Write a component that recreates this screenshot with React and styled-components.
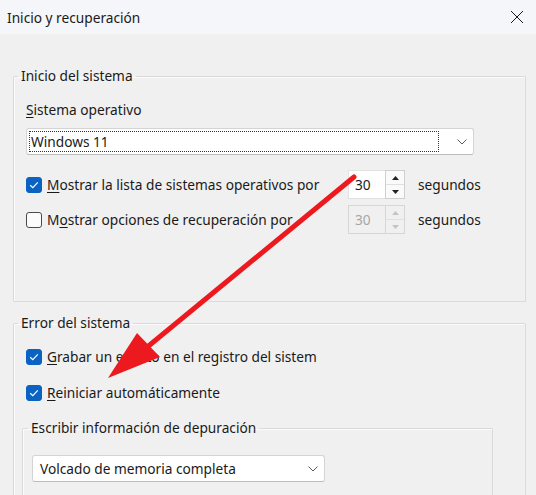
import React from 'react';
import styled, { createGlobalStyle } from 'styled-components';

const GlobalStyle = createGlobalStyle`
  html, body {
    margin: 0;
    padding: 0;
    background: #f0f0f0;
  }
  * {
    box-sizing: border-box;
  }
`;

const Dialog = styled.div`
  position: relative;
  width: 536px;
  height: 495px;
  overflow: hidden;
  background: #f0f0f0;
  font-family: 'Noto Sans', 'Open Sans', sans-serif;
  font-size: 13.7px;
  color: #1a1a1a;
`;

const TitleBar = styled.div`
  height: 34px;
  display: flex;
  align-items: center;
  justify-content: space-between;
  padding: 0 12px 0 7px;
  background: #f5f6fa;
`;

const CloseButton = styled.div`
  width: 14px;
  height: 14px;
  display: flex;
  align-items: center;
  justify-content: center;
`;

const Body = styled.div`
  padding: 32px 10px 0 13px;
`;

const Group = styled.fieldset`
  margin: ${p => p.$margin || '0'};
  padding: ${p => p.$padding || '0 12px'};
  border: 1px solid #dadada;
  border-radius: 1px;
  box-shadow: inset 1px 1px 0 #fbfbfb;
  min-width: 0;
`;

const Legend = styled.legend`
  padding: 0 3px;
  margin-left: ${p => p.$shift || 0}px;
  height: 20px;
  line-height: 20px;
  color: #1a1a1a;
`;

const Label = styled.div`
  line-height: 20px;
  margin-top: 14px;
`;

const AccessKey = styled.span`
  text-decoration: underline;
  text-underline-offset: 2px;
  text-decoration-thickness: 1px;
`;

const Select = styled.div`
  width: ${p => p.$width}px;
  height: 27px;
  margin-top: ${p => p.$top || 0}px;
  display: flex;
  align-items: center;
  background: #fff;
  border: 1px solid #d4d4d4;
  border-bottom-color: #bcbcbc;
  border-radius: 3px;
  padding: 2px 6px 2px 2px;
`;

const SelectValue = styled.div`
  flex: 1;
  height: 100%;
  display: flex;
  align-items: center;
  padding-left: ${p => (p.$focused ? 1 : 4)}px;
  border: 1px dotted ${p => (p.$focused ? '#333' : 'transparent')};
  margin-right: ${p => p.$gap}px;
  white-space: nowrap;
`;

const OptionRow = styled.div`
  display: grid;
  grid-template-columns: 309px 57px auto;
  column-gap: 13px;
  align-items: center;
  margin-top: ${p => p.$top}px;
`;

const CheckLine = styled.label`
  display: flex;
  align-items: center;
  gap: 5px;
  line-height: 20px;
  white-space: nowrap;
  margin-top: ${p => p.$top || 0}px;
`;

const Box = styled.span`
  width: 16px;
  height: 16px;
  flex: none;
  border-radius: 3px;
  display: flex;
  align-items: center;
  justify-content: center;
  background: ${p => (p.$checked ? '#0a63c3' : '#fbfbfb')};
  border: 1px solid ${p => (p.$checked ? '#0a63c3' : '#4a4a4a')};
`;

const Spinner = styled.div`
  height: 29px;
  display: flex;
  background: ${p => (p.$disabled ? '#f0f0f0' : '#fff')};
  border: 1px solid ${p => (p.$disabled ? '#d6d6d6' : '#e2e2e2')};
  border-right: none;
  color: ${p => (p.$disabled ? '#a6a6a6' : '#1a1a1a')};
`;

const SpinValue = styled.div`
  flex: 1;
  display: flex;
  align-items: center;
  padding-left: 6px;
`;

const SpinButtons = styled.div`
  width: 20px;
  display: flex;
  flex-direction: column;
  border: 1px solid ${p => (p.$disabled ? '#d6d6d6' : '#cfcfcf')};
  margin: -1px 0;
  background: ${p => (p.$disabled ? '#f0f0f0' : '#fafafa')};
`;

const SpinButton = styled.div`
  flex: 1;
  display: flex;
  align-items: center;
  justify-content: center;
  & + & {
    border-top: 1px solid ${p => (p.$disabled ? '#e0e0e0' : '#d8d8d8')};
  }
`;

const Arrow = styled.svg`
  position: absolute;
  left: 0;
  top: 0;
  pointer-events: none;
`;

const Check = () => (
  <svg width="10" height="8" viewBox="0 0 10 8">
    <path d="M1.2 4.2 L3.8 6.6 L8.8 1.4" fill="none" stroke="#fff" strokeWidth="1.2" />
  </svg>
);

const Chevron = () => (
  <svg width="10" height="6" viewBox="0 0 10 6">
    <path d="M0.5 0.5 L5 5 L9.5 0.5" fill="none" stroke="#5a5a5a" strokeWidth="1" />
  </svg>
);

const Tri = ({ up, color }) => (
  <svg width="7" height="4" viewBox="0 0 7 4">
    <path d={up ? 'M0 4 L3.5 0 L7 4 Z' : 'M0 0 L3.5 4 L7 0 Z'} fill={color} />
  </svg>
);

const Checkbox = ({ checked, children, top }) => (
  <CheckLine $top={top}>
    <Box $checked={checked}>{checked && <Check />}</Box>
    <span>{children}</span>
  </CheckLine>
);

const NumberField = ({ value, disabled }) => {
  const c = disabled ? '#c4c4c4' : '#222';
  return (
    <Spinner $disabled={disabled}>
      <SpinValue>{value}</SpinValue>
      <SpinButtons $disabled={disabled}>
        <SpinButton $disabled={disabled}>
          <Tri up color={c} />
        </SpinButton>
        <SpinButton $disabled={disabled}>
          <Tri color={c} />
        </SpinButton>
      </SpinButtons>
    </Spinner>
  );
};

export default function App() {
  return (
    <Dialog>
      <GlobalStyle />
      <TitleBar>
        <span>Inicio y recuperación</span>
        <CloseButton>
          <svg width="14" height="14" viewBox="0 0 14 14">
            <path d="M1 1 L13 13 M13 1 L1 13" stroke="#1a1a1a" strokeWidth="1" />
          </svg>
        </CloseButton>
      </TitleBar>

      <Body>
        <Group $padding="0 12px 67px">
          <Legend $shift={-8}>Inicio del sistema</Legend>
          <Label>
            <AccessKey>S</AccessKey>istema operativo
          </Label>
          <Select $width={448} $top={8}>
            <SelectValue $focused $gap={18}>Windows 11</SelectValue>
            <Chevron />
          </Select>
          <OptionRow $top={15}>
            <Checkbox checked>
              <AccessKey>M</AccessKey>ostrar la lista de sistemas operativos por
            </Checkbox>
            <NumberField value="30" />
            <span>segundos</span>
          </OptionRow>
          <OptionRow $top={6}>
            <Checkbox>
              M<AccessKey>o</AccessKey>strar opciones de recuperación por
            </Checkbox>
            <NumberField value="30" disabled />
            <span>segundos</span>
          </OptionRow>
        </Group>

        <Group $margin="11px 0 0" $padding="0 12px 40px">
          <Legend $shift={-8}>Error del sistema</Legend>
          <Checkbox checked top={14}>
            <AccessKey>G</AccessKey>rabar un evento en el registro del sistem
          </Checkbox>
          <Checkbox checked top={16}>
            <AccessKey>R</AccessKey>einiciar automáticamente
          </Checkbox>
          <Group $margin="15px 20px 0 -4px" $padding="0 9px 30px">
            <Legend $shift={-4}>Escribir información de depuración</Legend>
            <Select $width={293} $top={17}>
              <SelectValue $gap={8}>Volcado de memoria completa</SelectValue>
              <Chevron />
            </Select>
          </Group>
        </Group>
      </Body>

      <Arrow width="536" height="495" viewBox="0 0 536 495">
        <line x1="354" y1="177" x2="140" y2="353" stroke="#ec1a1f" strokeWidth="5" strokeLinecap="round" />
        <polygon points="108,378 137,333 160,357" fill="#ec1a1f" />
      </Arrow>
    </Dialog>
  );
}
